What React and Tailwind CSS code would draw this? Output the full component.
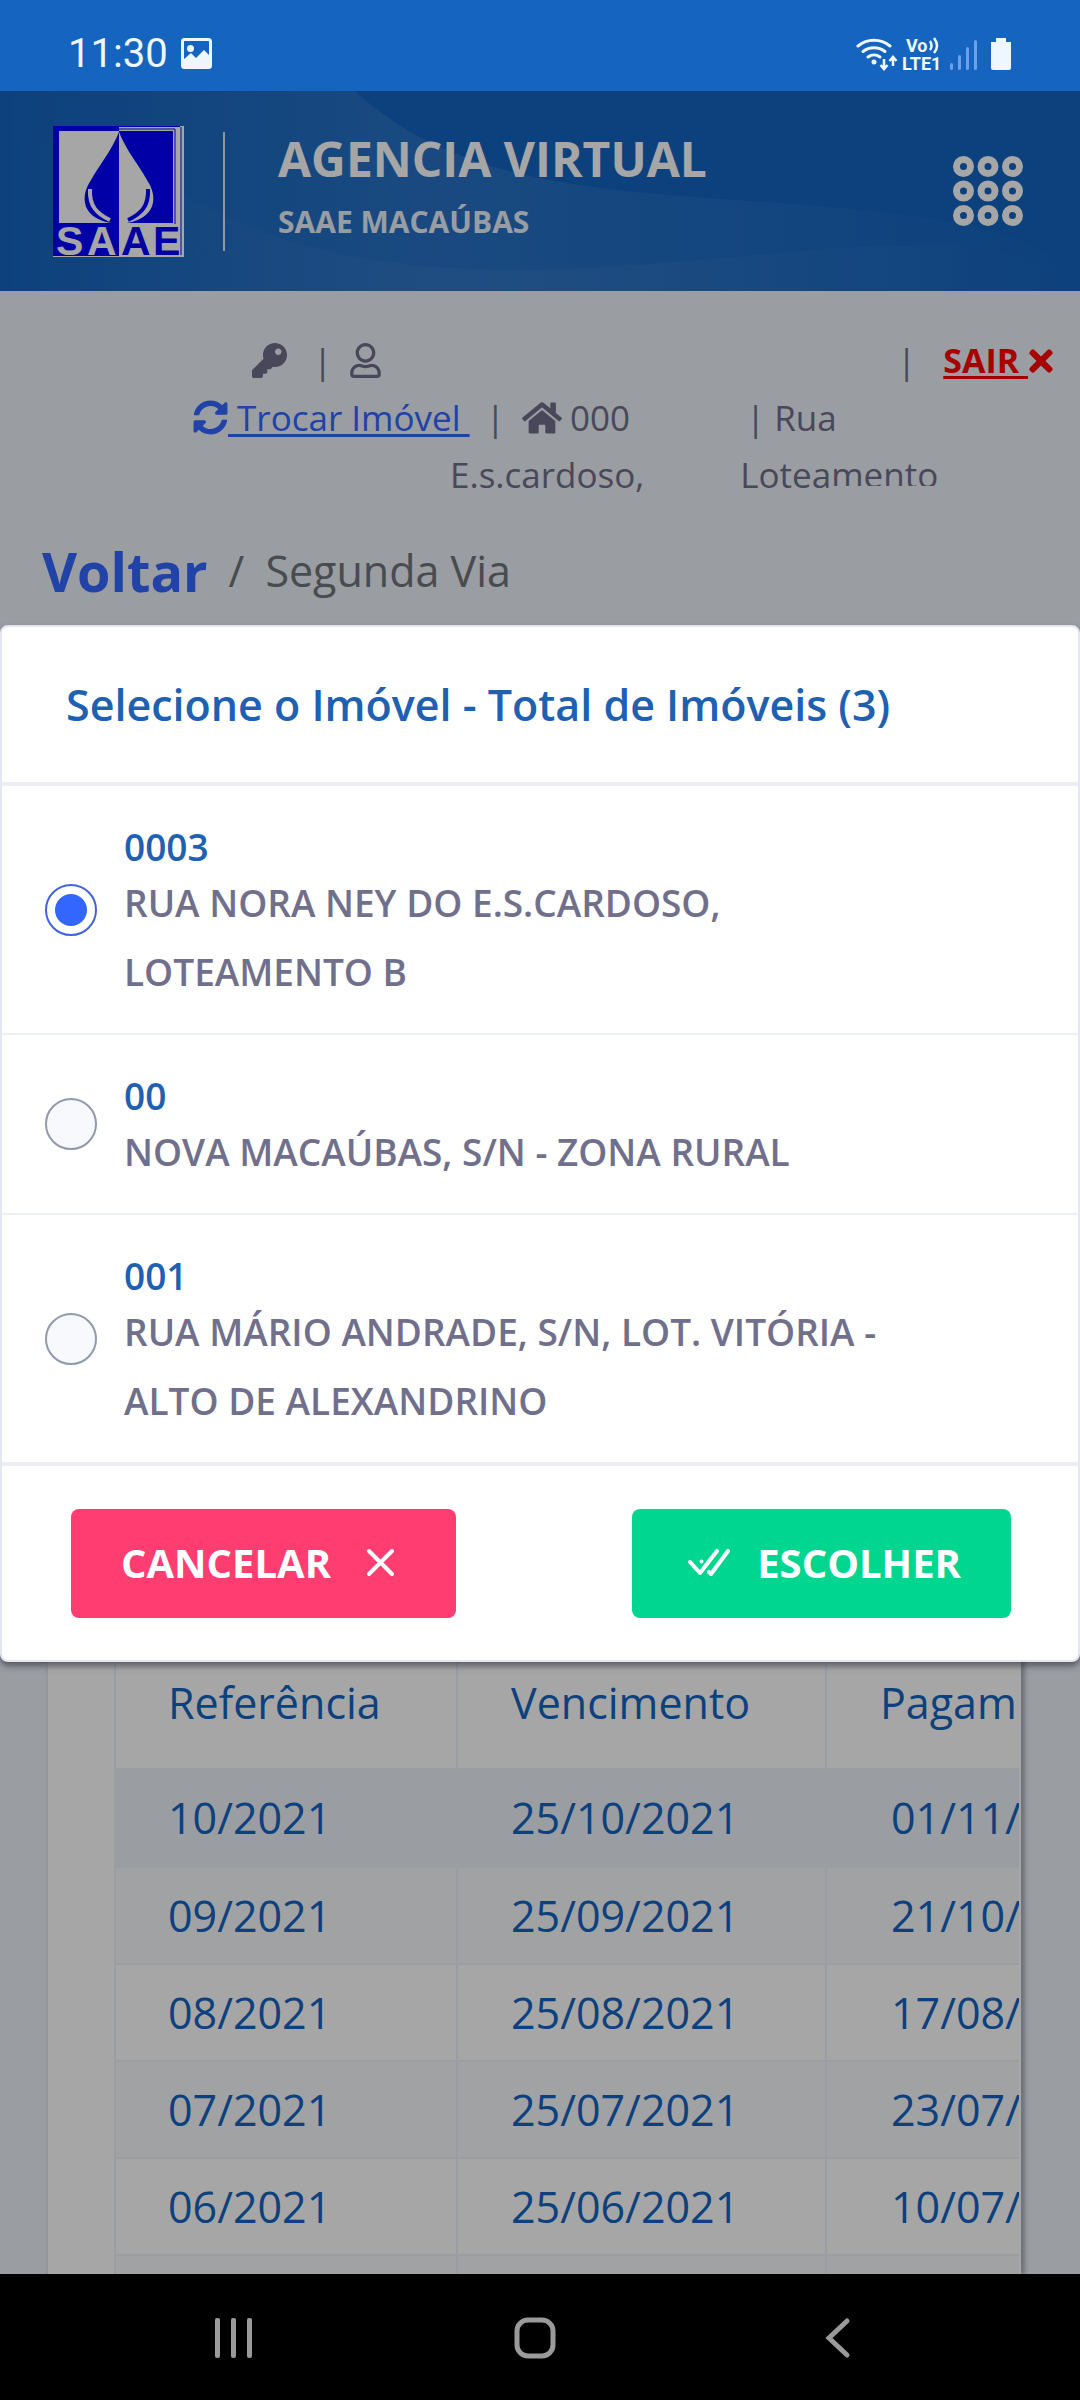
import React, { useState } from "react";
import { FaKey, FaRegUser, FaTimes, FaSyncAlt, FaHome } from "react-icons/fa";

const properties = [
  { id: "a", code: "0003", lines: ["RUA NORA NEY DO E.S.CARDOSO,", "LOTEAMENTO B"] },
  { id: "b", code: "00", lines: ["NOVA MACAÚBAS, S/N - ZONA RURAL"] },
  { id: "c", code: "001", lines: ["RUA MÁRIO ANDRADE, S/N, LOT. VITÓRIA -", "ALTO DE ALEXANDRINO"] },
];

const bills = [
  { ref: "10/2021", due: "25/10/2021", paid: "01/11/", tone: "h-[100px] bg-[#edf1f7]" },
  { ref: "09/2021", due: "25/09/2021", paid: "21/10/", tone: "h-[97px] bg-[#f7f9fc]" },
  { ref: "08/2021", due: "25/08/2021", paid: "17/08/", tone: "h-[97px] bg-white" },
  { ref: "07/2021", due: "25/07/2021", paid: "23/07/", tone: "h-[97px] bg-[#f7f9fc]" },
  { ref: "06/2021", due: "25/06/2021", paid: "10/07/", tone: "h-[97px] bg-white" },
  { ref: "", due: "", paid: "", tone: "h-[97px] bg-[#f7f9fc]" },
];

function StatusBar() {
  return (
    <div className="flex h-[91px] shrink-0 items-center justify-between bg-[#1565c0] pt-4 pr-[68px] pl-[68px] text-[#eef6ff]">
      <div className="flex items-center gap-[13px]">
        <span className="font-[Roboto,sans-serif] text-[40px] leading-none">11:30</span>
        <svg width="31" height="31" viewBox="0 0 31 31" aria-hidden="true">
          <rect x="1.5" y="1.5" width="28" height="28" rx="2" fill="none" stroke="currentColor" strokeWidth="3" />
          <circle cx="9.5" cy="10.5" r="3.5" fill="currentColor" />
          <path d="M2 22l8-7 5 5 8-8 6 6v11H2z" fill="currentColor" />
        </svg>
      </div>
      <div className="flex items-center">
        <svg width="42" height="34" viewBox="0 0 42 34" fill="none" stroke="currentColor" strokeLinecap="round" aria-hidden="true">
          <path d="M2 9a25 25 0 0 1 32 0" strokeWidth="3" />
          <path d="M7 14.500a18 18 0 0 1 22 0" strokeWidth="3" />
          <path d="M12 20a10 10 0 0 1 12 0" strokeWidth="3" />
          <circle cx="18" cy="25" r="2.500" fill="currentColor" stroke="none" />
          <path d="M28 22v9M24.500 28l3.500 4 3.500-4M37 29v-8M33.500 24l3.500-4 3.500 4" strokeWidth="2.500" strokeLinecap="butt" />
        </svg>
        <svg className="ml-1" width="44" height="38" viewBox="0 0 44 38" fill="currentColor" aria-hidden="true">
          <text x="4" y="17" fontFamily="Roboto" fontWeight="700" fontSize="18">Vo</text>
          <text x="0" y="35" fontFamily="Roboto" fontWeight="700" fontSize="18">LTE1</text>
          <path d="M28 6q3 5 0 9M32 3q6 8 0 15" fill="none" stroke="currentColor" strokeWidth="2.500" />
        </svg>
        <svg className="ml-1" width="28" height="34" viewBox="0 0 28 34" fill="#6f9fe4" aria-hidden="true">
          <rect x="0" y="26" width="3" height="7" rx="1.500" />
          <rect x="8" y="18" width="3" height="15" rx="1.500" />
          <rect x="16" y="10" width="3" height="23" rx="1.500" />
          <rect x="24" y="3" width="3" height="30" rx="1.500" />
        </svg>
        <svg className="ml-3" width="22" height="34" viewBox="0 0 22 34" fill="currentColor" aria-hidden="true">
          <path d="M6 1h10v4h5v26a2 2 0 0 1-2 2H3a2 2 0 0 1-2-2V5h5z" />
        </svg>
      </div>
    </div>
  );
}

function Logo() {
  return (
    <svg width="131" height="131" viewBox="0 0 131 131" overflow="visible" role="img" aria-label="SAAE">
      <rect width="131" height="131" fill="#fff" />
      <path d="M0 0H127v1H66v129H0z" fill="#0000ff" />
      <path d="M128 1V129M122 3V98M66 3H122" stroke="#0000ff" strokeWidth="1" fill="none" />
      <rect x="6" y="5" width="60" height="92" fill="#fff" />
      <rect x="66" y="5" width="54" height="92" fill="#0000ff" />
      <path d="M66 6C59 24 47 38 38 54C26 72 30 92 58 97H66z" fill="#0000ff" />
      <path d="M66 6C73 24 85 38 94 54C106 72 102 92 74 97H66z" fill="#fff" />
      <path d="M37 63C36 80 44 88 57 94" fill="none" stroke="#fff" strokeWidth="4" />
      <path d="M95 63C96 80 88 88 75 94" fill="none" stroke="#0000ff" strokeWidth="4" />
      <g fontFamily="Liberation Sans" fontWeight="700" fontSize="41">
        <text x="3" y="129" fill="#fff">S</text>
        <text x="34" y="129" fill="#fff">A</text>
        <text x="68" y="129" fill="#0000ff">A</text>
        <text x="100" y="129" fill="#0000ff">E</text>
      </g>
    </svg>
  );
}

function AppsIcon() {
  const steps = [0, 1, 2];
  return (
    <svg width="72" height="72" viewBox="0 0 72 72" fill="none" stroke="#fff" strokeWidth="7" aria-hidden="true">
      {steps.map((row) =>
        steps.map((col) => <circle key={`${row}${col}`} cx={11.5 + col * 24.5} cy={11.5 + row * 24.5} r="7" />)
      )}
    </svg>
  );
}

function Header() {
  return (
    <header className="relative flex h-[200px] shrink-0 items-center bg-[#1565c0] pr-14 pl-[53px] text-white">
      <svg className="absolute inset-0 h-full w-full" viewBox="0 0 1080 200" preserveAspectRatio="none" aria-hidden="true">
        <defs>
          <linearGradient id="waveA" x1="0" x2="1">
            <stop offset="0" stopColor="#fff" stopOpacity="0" />
            <stop offset="0.4" stopColor="#fff" stopOpacity="0.08" />
            <stop offset="1" stopColor="#fff" stopOpacity="0" />
          </linearGradient>
          <linearGradient id="waveB" x1="0" x2="1">
            <stop offset="0" stopColor="#fff" stopOpacity="0" />
            <stop offset="0.5" stopColor="#fff" stopOpacity="0.05" />
            <stop offset="1" stopColor="#fff" stopOpacity="0" />
          </linearGradient>
        </defs>
        <path d="M0 0H355C420 60 500 84 600 97S850 112 950 131S1060 170 1080 200H0z" fill="url(#waveA)" />
        <path d="M0 40C100 60 150 85 190 107C300 170 420 180 540 179C700 175 840 150 960 154C1010 158 1040 170 1080 200H0z" fill="url(#waveB)" />
      </svg>
      <div className="relative flex flex-1 items-center">
        <Logo />
        <div className="ml-[39px] h-[119px] w-[2px] bg-[#dbe8fb]" />
        <div className="ml-[53px] pb-[4px]">
          <h1 className="text-[48px] leading-[66px] font-bold">AGENCIA VIRTUAL</h1>
          <p className="text-[30px] leading-[60px] font-bold text-[#eaf1fb]">SAAE MACAÚBAS</p>
        </div>
        <button type="button" aria-label="Menu" className="ml-auto">
          <AppsIcon />
        </button>
      </div>
    </header>
  );
}

function UserInfo() {
  return (
    <section className="shrink-0 pt-[41px] text-[35px] leading-[57px] text-[#716f8c]">
      <div className="flex items-center pr-[26px] pl-[252px]">
        <FaKey size={35} />
        <span className="ml-[26px]">|</span>
        <FaRegUser size={35} className="ml-[16px]" />
        <span className="ml-auto">|</span>
        <a href="#sair" className="ml-[27px] flex items-center text-[34px] font-bold text-[#ff0000]">
          <span className="whitespace-pre underline decoration-[3px] underline-offset-[3px]">{"SAIR "}</span>
          <FaTimes size={34} className="-mx-1" />
        </a>
      </div>
      <div className="flex items-center whitespace-pre pl-[193px]">
        <a href="#trocar" className="flex items-center text-[#3366ff]">
          <FaSyncAlt size={35} />
          <span className="underline decoration-[3px] underline-offset-[3px]">{" Trocar Imóvel "}</span>
        </a>
        <span className="ml-[16px]">|</span>
        <FaHome size={40} className="ml-[17px]" />
        <span className="ml-[8px]">000</span>
        <span className="ml-[116px]">| Rua</span>
      </div>
      <div className="flex pl-[450px]">
        <span>E.s.cardoso,</span>
        <span className="ml-[96px]">Lotea</span>
        <span className="[clip-path:inset(0_0_17px_0)]">mento</span>
      </div>
    </section>
  );
}

function Breadcrumb() {
  return (
    <nav aria-label="Navegação" className="flex shrink-0 items-center pt-[32px] pl-[42px] leading-[72px]">
      <a href="#voltar" className="text-[54px] font-bold text-[#3366ff]">Voltar</a>
      <span className="ml-[21px] text-[43px] text-[#6f747c]">/</span>
      <span className="ml-[21px] text-[43px] text-[#6f747c]">Segunda Via</span>
    </nav>
  );
}

function BillsCard() {
  return (
    <section className="mr-[59px] ml-[46px] mt-[40px] min-h-0 flex-1 overflow-hidden border-l-2 border-[#e4e9f2] bg-white pt-[991px] pr-[2px] pl-[66px] shadow-[4px_0_4px_0_rgba(44,51,73,0.35)]">
      <div className="overflow-hidden border-l-2 border-[#edf1f7]">
        <table className="w-[1240px] table-fixed border-separate border-spacing-0 text-[43px] text-[#1565c0]">
          <thead>
            <tr className="h-[130px] text-left">
              <th className="w-[342px] border-r-2 border-[#edf1f7] pl-[52px] font-normal">Referência</th>
              <th className="w-[369px] border-r-2 border-[#edf1f7] pl-[53px] font-normal">Vencimento</th>
              <th className="pl-[53px] font-normal">Pagam</th>
            </tr>
          </thead>
          <tbody>
            {bills.map((b, i) => (
              <tr key={i} className={b.tone}>
                <td className="border-r-2 border-b-2 border-[#edf1f7] pt-[2px] pl-[52px]">{b.ref}</td>
                <td className="border-r-2 border-b-2 border-[#edf1f7] pt-[2px] pl-[53px]">{b.due}</td>
                <td className="border-b-2 border-[#edf1f7] pt-[2px] pl-[64px]">{b.paid}</td>
              </tr>
            ))}
          </tbody>
        </table>
      </div>
    </section>
  );
}

function PropertyDialog() {
  const [selected, setSelected] = useState("a");
  return (
    <div
      role="dialog"
      aria-labelledby="dialog-title"
      className="absolute inset-x-0 top-[534px] rounded-lg border-2 border-[#e4e6f0] bg-white shadow-[0_4px_6px_0_rgba(44,44,60,0.6)]"
    >
      <h2 id="dialog-title" className="border-b-4 border-[#edeef5] px-16 text-[43px] leading-[155px] font-semibold text-[#1e60b2]">
        Selecione o Imóvel - Total de Imóveis (3)
      </h2>
      <div role="radiogroup" aria-labelledby="dialog-title">
        {properties.map((p) => (
          <label
            key={p.id}
            className="flex items-center border-b-2 border-[#edf0f5] pl-[43px] text-[37px] font-semibold last:border-b-4 last:border-[#edeef5]"
          >
            <input
              type="radio"
              name="imovel"
              checked={selected === p.id}
              onChange={() => setSelected(p.id)}
              className="grid size-[52px] shrink-0 appearance-none place-content-center rounded-full border-2 border-[#9199ac] bg-[#f7f9fc] checked:border-[#4363dd] checked:bg-white checked:before:size-8 checked:before:rounded-full checked:before:bg-[#3366ff] checked:before:content-['']"
            />
            <span className="ml-[27px] flex flex-col pt-[39px] pb-[27px]">
              <span className="leading-[43px] text-[#1e60b2]">{p.code}</span>
              {p.lines.map((line) => (
                <span key={line} className="leading-[69px] text-[#71708c]">{line}</span>
              ))}
            </span>
          </label>
        ))}
      </div>
      <div className="flex justify-between pt-[43px] pr-[67px] pb-[42px] pl-[69px]">
        <button type="button" className="flex h-[109px] items-center rounded-lg bg-[#ff3d71] pr-[61px] pb-[2px] pl-[50px] text-[40px] font-bold text-white">
          CANCELAR
          <svg className="ml-[34px]" width="30" height="30" viewBox="0 0 30 30" fill="none" stroke="currentColor" strokeWidth="4" strokeLinecap="round" aria-hidden="true">
            <path d="M4 3l23 23M27 3L4 26" />
          </svg>
        </button>
        <button type="button" className="flex h-[109px] items-center rounded-lg bg-[#00d68f] pr-[50px] pb-[2px] pl-[56px] text-[40px] font-bold text-white">
          <svg className="mr-[26px]" width="43" height="27" viewBox="0 0 43 27" fill="none" stroke="currentColor" strokeWidth="4" strokeLinecap="round" strokeLinejoin="round" aria-hidden="true">
            <path d="M2 13l10 11L29 2M21 23l2 2L40 2" />
            <circle cx="13.500" cy="12.500" r="2" fill="currentColor" stroke="none" />
          </svg>
          ESCOLHER
        </button>
      </div>
    </div>
  );
}

function NavigationBar() {
  return (
    <div className="flex h-[126px] shrink-0 items-center bg-black pt-[2px] pr-[229px] pl-[214px] text-[#9a9a9a]">
      <button type="button" aria-label="Recentes">
        <svg width="39" height="42" viewBox="0 0 39 42" fill="currentColor">
          <rect x="1" y="1" width="5" height="40" rx="2" />
          <rect x="17" y="1" width="5" height="40" rx="2" />
          <rect x="33" y="1" width="5" height="40" rx="2" />
        </svg>
      </button>
      <button type="button" aria-label="Início" className="ml-[260px]">
        <svg width="44" height="44" viewBox="0 0 44 44" fill="none" stroke="currentColor" strokeWidth="5">
          <rect x="4" y="4" width="36" height="36" rx="11" />
        </svg>
      </button>
      <button type="button" aria-label="Voltar" className="ml-auto">
        <svg width="26" height="42" viewBox="0 0 26 42" fill="none" stroke="currentColor" strokeWidth="5" strokeLinecap="round">
          <path d="M22 4L4 21l18 17" />
        </svg>
      </button>
    </div>
  );
}

export default function App() {
  return (
    <div className="flex h-screen flex-col overflow-hidden font-['Open_Sans',sans-serif]">
      <StatusBar />
      <main className="relative flex min-h-0 flex-1 flex-col overflow-hidden bg-[#edf1f7]">
        <Header />
        <UserInfo />
        <Breadcrumb />
        <BillsCard />
        <div className="absolute inset-0 bg-black/35" />
        <PropertyDialog />
      </main>
      <NavigationBar />
    </div>
  );
}
